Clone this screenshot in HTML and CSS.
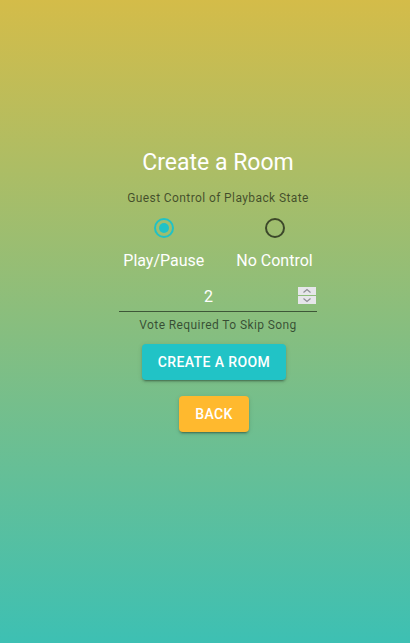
FILE: index.html
```html
<!DOCTYPE html>
<html lang="en">
<head>
<meta charset="utf-8">
<title>Create a Room</title>
<link rel="stylesheet" href="styles.css">
</head>
<body>
<main class="page">
  <section class="form">
    <h1 class="title">Create a Room</h1>
    <p class="helper">Guest Control of Playback State</p>
    <div class="radios">
      <label class="choice">
        <span class="radio radio-on">
          <svg viewBox="0 0 24 24" width="24" height="24"><circle cx="12" cy="12" r="9" fill="none" stroke="currentColor" stroke-width="2"/><circle cx="12" cy="12" r="5" fill="currentColor"/></svg>
        </span>
        <span class="choice-label">Play/Pause</span>
      </label>
      <label class="choice">
        <span class="radio radio-off">
          <svg viewBox="0 0 24 24" width="24" height="24"><circle cx="12" cy="12" r="9" fill="none" stroke="currentColor" stroke-width="2"/></svg>
        </span>
        <span class="choice-label">No Control</span>
      </label>
    </div>
    <div class="field">
      <input class="votes" type="number" value="2" min="1">
      <span class="spin">
        <span class="spin-btn"><svg viewBox="0 0 10 6" width="10" height="6"><path d="M1.5 4.5 L5 1.5 L8.5 4.5" fill="none" stroke="#8e8e95" stroke-width="1.2"/></svg></span>
        <span class="spin-btn"><svg viewBox="0 0 10 6" width="10" height="6"><path d="M1.5 1.5 L5 4.5 L8.5 1.5" fill="none" stroke="#8e8e95" stroke-width="1.2"/></svg></span>
      </span>
    </div>
    <p class="helper helper-vote">Vote Required To Skip Song</p>
    <div class="actions">
      <button class="btn btn-create" type="button">Create a Room</button>
      <button class="btn btn-back" type="button">Back</button>
    </div>
  </section>
</main>
</body>
</html>
```
FILE: styles.css
```css
* { box-sizing: border-box; }
html, body { margin: 0; padding: 0; }
body {
  width: 410px;
  height: 643px;
  overflow: hidden;
  font-family: Roboto, "Liberation Sans", sans-serif;
  background: linear-gradient(180deg, #d4bc49 0%, #3dc0b3 100%);
}
.page {
  height: 643px;
  display: flex;
  justify-content: center;
  padding-left: 26px;
}
.form {
  display: flex;
  flex-direction: column;
  align-items: center;
  padding-top: 147px;
}
.title {
  margin: 0;
  font-size: 23px;
  font-weight: 400;
  line-height: 32px;
  color: #fff;
}
.helper {
  margin: 9px 0 0;
  font-size: 12px;
  line-height: 20px;
  color: rgba(0, 0, 0, 0.6);
  letter-spacing: 0.4px;
}
.radios {
  display: flex;
  gap: 32px;
  margin-top: -1px;
}
.choice {
  display: flex;
  flex-direction: column;
  align-items: center;
}
.radio {
  display: flex;
  padding: 9px;
}
.radio svg { display: block; }
.radio-on { color: #20c2c6; }
.radio-off { color: rgba(0, 0, 0, 0.62); }
.choice-label {
  font-size: 16px;
  line-height: 24px;
  color: #fff;
}
.field {
  margin-top: 10px;
  width: 198px;
  border-bottom: 1px solid rgba(0, 0, 0, 0.55);
  display: flex;
  align-items: center;
}
.votes {
  flex: 1;
  min-width: 0;
  border: 0;
  outline: 0;
  background: transparent;
  font-family: Roboto, "Liberation Sans", sans-serif;
  font-size: 16px;
  color: #fff;
  text-align: center;
  padding: 4px 0 5px;
  height: 28px;
  margin: 0;
  -moz-appearance: textfield;
}
.votes::-webkit-inner-spin-button,
.votes::-webkit-outer-spin-button {
  -webkit-appearance: none;
  margin: 0;
}
.spin {
  display: flex;
  flex-direction: column;
  gap: 1px;
  width: 18px;
  margin-right: 1px;
  margin-top: -3px;
}
.spin-btn {
  display: flex;
  align-items: center;
  justify-content: center;
  height: 8px;
  background: #e6e6ea;
}
.spin-btn svg { display: block; }
.helper-vote {
  margin-top: 3px;
}
.actions {
  display: flex;
  flex-direction: column;
  align-items: center;
  gap: 16px;
  margin-top: 9px;
  margin-right: 8px;
}
.btn {
  border: 0;
  border-radius: 4px;
  padding: 6px 16px;
  font-family: Roboto, "Liberation Sans", sans-serif;
  font-size: 14px;
  font-weight: 500;
  line-height: 24px;
  letter-spacing: 0.02857em;
  text-transform: uppercase;
  color: #fff;
  box-shadow: 0 3px 1px -2px rgba(0,0,0,0.2), 0 2px 2px 0 rgba(0,0,0,0.14), 0 1px 5px 0 rgba(0,0,0,0.12);
}
.btn-create { background: #21c3c6; }
.btn-back { background: #ffb92e; }
```
